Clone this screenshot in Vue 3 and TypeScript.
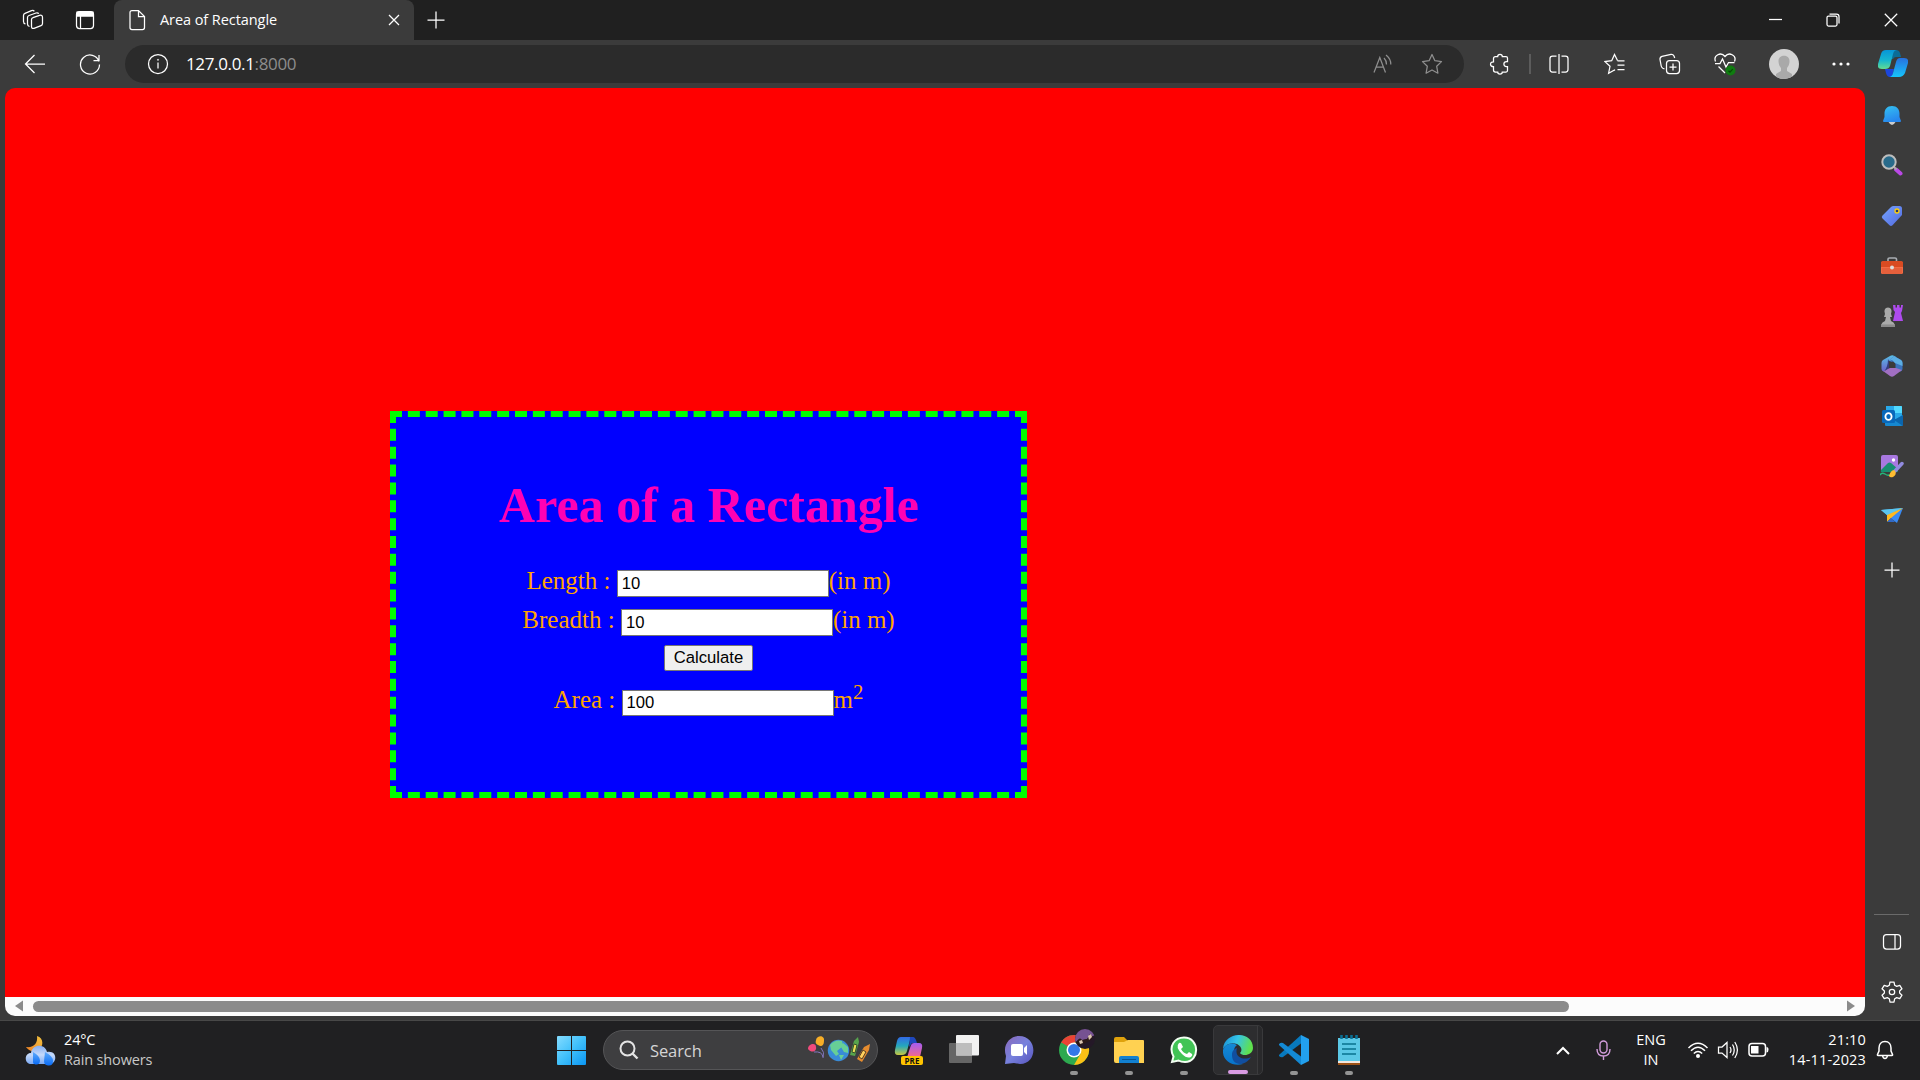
<script setup lang="ts">
import { ref } from 'vue'

const length = ref('10')
const breadth = ref('10')
const area = ref('100')

function calculate(): void {
  area.value = String(Number(length.value) * Number(breadth.value))
}
</script>

<template>
  <div class="screen">
    <header class="tabs">
      <span class="cell workspaces">
        <svg width="22" height="22" viewBox="0 0 22 22" class="line">
          <path d="M11 8.600 17.500 6.300 Q20.500 5.500 20.500 8.500 V14.500 Q20.500 16 19 16.600 L12 19.300 Q9.500 20 9.500 17.500 V10.500 Q9.500 9 11 8.600" />
          <path d="M7.500 17.500 Q5.500 17 5.500 15 V8.500 Q5.500 7 7 6.500 L14 4 Q16 3.400 16.700 4.800" />
          <path d="M3.500 15 Q1.500 14.500 1.500 12.500 V6.500 Q1.500 5 3 4.400 L9.500 1.700 Q11.500 1 12.300 2.300" />
        </svg>
      </span>
      <span class="cell tabmenu">
        <svg width="20" height="20" viewBox="0 0 20 20" class="line">
          <rect x="1.500" y="1.500" width="17" height="17" rx="3" />
          <path d="M2 2H18V6H2Z" fill="#fff" /><path d="M5.500 6V18" />
        </svg>
      </span>
      <div class="tab">
        <svg width="17" height="22" viewBox="0 0 17 22" class="line">
          <path d="M3 1.500H9.500L15.500 7.500V18.500Q15.500 20.500 13.500 20.500H3Q1 20.500 1 18.500V3.500Q1 1.500 3 1.500ZM9.500 1.500V7.500H15.500" />
        </svg>
        <span class="title">Area of Rectangle</span>
        <svg width="12" height="12" viewBox="0 0 12 12" class="line"><path d="M1 1 11 11M11 1 1 11" /></svg>
      </div>
      <svg class="line newtab" width="18" height="18" viewBox="0 0 18 18"><path d="M9 .500V17.500M.500 9H17.500" /></svg>
      <div class="controls">
        <svg width="13" height="13" viewBox="0 0 13 13" class="line"><path d="M0 6.500H13" /></svg>
        <svg width="14" height="14" viewBox="0 0 14 14" class="line"><rect x="1" y="3" width="10" height="10" rx="1.500" /><path d="M3.500 1H10.500Q13 1 13 3.500V10.500" /></svg>
        <svg width="14" height="14" viewBox="0 0 14 14" class="line"><path d="M.800 .800 13.200 13.200M13.200 .800 .800 13.200" /></svg>
      </div>
    </header>

    <nav class="toolbar">
      <span class="cell back"><svg width="22" height="20" viewBox="0 0 22 20" class="line"><path d="M10.500 1 1.500 10 10.500 19M1.500 10H21" /></svg></span>
      <span class="cell refresh"><svg width="22" height="22" viewBox="0 0 22 22" class="line"><path d="M20 8.500A9.500 9.500 0 1 0 20.500 11.500M20 2V7.500H14.500" /></svg></span>
      <div class="address">
        <svg width="22" height="22" viewBox="0 0 22 22" class="line"><circle cx="11" cy="11" r="9.500" /><path d="M11 9.500V15.500" /><circle cx="11" cy="6.800" r=".6" fill="#fff" stroke-width=".6" /></svg>
        <span class="url">127.0.0.1<span class="port">:8000</span></span>
        <svg width="20" height="20" viewBox="0 0 20 20" class="line dim read"><path d="M1 18.500 6.800 3.500 12.500 18.500M3.300 13H10.500M11 4Q13.500 6.500 13.500 10.500M13 1Q18 5 17.800 10.500" /></svg>
        <svg width="22" height="22" viewBox="0 0 22 22" class="line dim"><path d="M11 1.500 13.900 7.700 20.500 8.600 15.700 13.300 16.900 20.200 11 17 5.100 20.200 6.300 13.300 1.500 8.600 8.100 7.700Z" stroke-linejoin="round" /></svg>
      </div>
      <span class="cell puzzle"><svg width="22" height="22" viewBox="0 0 22 22" class="line"><path d="M6.500 3.500H8.700C8.700 .500 13.300 .500 13.300 3.500H17Q18.500 3.500 18.500 5V8.500H17.500C14 8.500 14 13.500 17.500 13.500H18.500V17.500Q18.500 19 17 19H13.300C13.300 21.800 8.700 21.800 8.700 19H6.500Q4.500 19 4.500 17V13.700C.500 13.700 .500 8.800 4.500 8.800V5.500Q4.500 3.500 6.500 3.500Z" /></svg></span>
      <span class="divider"></span>
      <span class="cell split"><svg width="22" height="22" viewBox="0 0 22 22" class="line"><path d="M8.500 3H4.500Q2 3 2 5.500V16.500Q2 19 4.500 19H8.500M13.500 3H17.500Q20 3 20 5.500V16.500Q20 19 17.500 19H13.500" /><path d="M11 1V21" /></svg></span>
      <span class="cell"><svg width="22" height="22" viewBox="0 0 22 22" class="line"><path d="M13.500 7.500 10.500 1.500 7.700 7.700 1 8.600 6 13.300 4.600 20.200 10.500 17 11 17.400M13.500 7.800H20.500M13.500 12H20.500M13.500 16.500H20.500" /></svg></span>
      <span class="cell"><svg width="22" height="22" viewBox="0 0 22 22" class="line"><rect x="7.500" y="7.500" width="13" height="13" rx="3" /><path d="M14 10.500V17.500M10.500 14H17.500M5.500 16 3.800 15.200Q2.500 14.500 2.200 13L1 6.500Q.700 4 3 3.300L12 1.300Q14 1 15 3L15.700 5" /></svg></span>
      <span class="cell"><svg width="24" height="24" viewBox="0 0 24 24" class="line"><path d="M2.500 9.500C0 3 8-.500 12 4.500C16-.500 24 3 21.500 9.500M2 11.500H7L9.500 7 13 15 15.500 10.500H21.500M5.500 14.500 12 21" /><circle cx="17.500" cy="18.500" r="5" fill="#107c10" stroke="none" /><path d="m15.500 18.700 1.500 1.500 2.700-3" stroke="#054b05" /></svg></span>
      <span class="cell avatar"><svg width="30" height="30" viewBox="0 0 30 30"><defs><clipPath id="face"><circle cx="15" cy="15" r="15" /></clipPath></defs><g clip-path="url(#face)"><path d="M0 0H30V30H0Z" fill="#d3d3d3" /><path d="M9.500 12C9.500 5 20.500 5 20.500 12 20.500 16 19 17.500 18 19V22L23 25V30H7V25L12 22V19C11 17.500 9.500 16 9.500 12Z" fill="#a9a9a9" /></g></svg></span>
      <span class="cell dots"><svg width="18" height="4" viewBox="0 0 18 4"><g fill="#fff"><circle cx="2" cy="2" r="1.600" /><circle cx="9" cy="2" r="1.600" /><circle cx="16" cy="2" r="1.600" /></g></svg></span>
      <span class="cell copilot">
        <svg width="30" height="30" viewBox="0 0 30 30">
          <defs>
            <linearGradient id="cpa" x1="0" y1="0" x2="0" y2="1"><stop stop-color="#0795d8" /><stop offset=".55" stop-color="#16b6cf" /><stop offset="1" stop-color="#62db91" /></linearGradient>
            <linearGradient id="cpb" x1="0" y1="0" x2="0" y2="1"><stop stop-color="#2870de" /><stop offset="1" stop-color="#16c5fb" /></linearGradient>
          </defs>
          <path d="M14 1H18Q21 1 22 4L23 8H18Q16 8 15 10H13Z" fill="#0b6c97" />
          <path d="M7 20H16L14 28H12Q9 28 8 24Z" fill="#1c46dc" />
          <path d="M8 1H19Q16 1 15 5L12 17Q11 20 7 20H4Q-1 20 0 15L3 5Q4 1 8 1Z" fill="url(#cpa)" />
          <path d="M22 9H26Q31 9 30 14L27 24Q25 28 21 28H11Q14 28 15 24L18 13Q19 9 22 9Z" fill="url(#cpb)" />
        </svg>
      </span>
    </nav>

    <div class="middle">
      <main class="page">
        <div class="canvas">
          <form class="card" @submit.prevent="calculate">
            <h1>Area of a Rectangle</h1>
            <div class="row"><label>Length :</label><input v-model="length" type="text" /><span>(in m)</span></div>
            <div class="row"><label>Breadth :</label><input v-model="breadth" type="text" /><span>(in m)</span></div>
            <div class="action"><button type="submit">Calculate</button></div>
            <div class="row result"><label>Area :</label><input v-model="area" type="text" /><span>m<sup>2</sup></span></div>
          </form>
        </div>
        <div class="scrollbar">
          <svg width="8" height="12" viewBox="0 0 8 12"><path d="M8 .500V11.500L0 6Z" fill="#8b8b8b" /></svg>
          <div class="thumb"></div>
          <svg width="8" height="12" viewBox="0 0 8 12"><path d="M0 .500V11.500L8 6Z" fill="#8b8b8b" /></svg>
        </div>
      </main>

      <aside class="sidebar">
        <svg width="22" height="22" viewBox="0 0 22 22"><defs><linearGradient id="bell" x1="0" y1="0" x2=".4" y2="1"><stop stop-color="#35c3f1" /><stop offset="1" stop-color="#2787ee" /></linearGradient></defs><path d="M7.500 17H14.500Q11 23 7.500 17Z" fill="#ccc" /><path d="M11 1C6 1 3.500 4.500 3.500 8.500V12L2 16Q2 17 3 17H19Q20 17 20 16L18.500 12V8.500C18.500 4.500 16 1 11 1Z" fill="url(#bell)" /></svg>
        <svg class="lens" width="22" height="22" viewBox="0 0 22 22"><path d="m15 15.500 4.500 4" stroke="#ba48e6" stroke-width="4" stroke-linecap="round" /><path d="m12.500 12.500 3 3" stroke="#aaa" stroke-width="2" /><circle cx="8" cy="8" r="6.700" fill="#296b8b" stroke="#bdbdbd" stroke-width="2" /></svg>
        <svg width="22" height="22" viewBox="0 0 22 22"><defs><linearGradient id="tag" x1="0" y1="0" x2="1" y2="1"><stop stop-color="#76a5ff" /><stop offset="1" stop-color="#5269df" /></linearGradient></defs><path d="M12.500 1H18.500Q21 1 21 3.500V10L11.500 20.300Q10 21.800 8.500 20.300L1.500 13.500Q0 12 1.500 10.500L10 2Q11 1 12.500 1Z" fill="url(#tag)" /><circle cx="16" cy="6" r="2" fill="#263b70" stroke="#ffcf0b" stroke-width="1.300" /></svg>
        <svg width="22" height="22" viewBox="0 0 22 22"><path d="M7 7V4Q7 3 8.500 3H14Q15.500 3 15.500 4V7" fill="none" stroke="#a9adb2" stroke-width="1.600" /><rect y="6.500" width="22" height="12.500" rx="1.500" fill="#f26b43" /><path d="M1 13H21V17.500Q21 19 19.500 19H2.500Q1 19 1 17.500Z" fill="#e5603c" /><path d="M0 8Q0 6 2 6H20Q22 6 22 8V12H0Z" fill="#d94b22" /><circle cx="11" cy="12.500" r="2" fill="#ddd" /></svg>
        <svg width="24" height="24" viewBox="0 0 24 24"><path d="M13 1H15.500V3.500H17V1H19.500V3.500H21V1H23L22 7 21 9 23 17H13L15 8 13.500 6Z" fill="#ae4bed" /><path d="M1 21Q2 18 5 17L6 13H4L5 10Q3 4 8 3.500 13 4 11 10L12 13H10L11 17Q14 18 15 21V23H1Z" fill="#aaa" /><path d="M1 20.500H15V23H1Z" fill="#8b8b8b" /></svg>
        <svg width="22" height="22" viewBox="0 0 22 22"><defs><linearGradient id="ma" x1="0" y1="0" x2="0" y2="1"><stop stop-color="#58bee6" /><stop offset="1" stop-color="#6b61cb" /></linearGradient></defs><path d="M9 1 2 5Q.500 6 .500 8V14Q.500 16 3 16.500L8 13V6L15 2 13 .700Q11-.200 9 1Z" fill="url(#ma)" /><path d="m8 6 5-5 7 4Q21.500 6 21.500 8V14Q21.500 16 19 16.800L14 13V8Z" fill="#3b73be" /><path d="m8 6 5-5 7 4Q21.500 6 21.500 8V11L14 8 11 5Z" fill="#5baee4" /><path d="M2 16 9 13H15L21 15 13 21Q11 22.500 9 21Z" fill="#a16fc2" /><path d="M8 6V13L3 16.500Q7 12 7 4Z" fill="#343d7e" /><path d="M8.500 8 12 6.500 14.500 9V13H9Z" fill="#3b3b3b" /></svg>
        <svg width="22" height="22" viewBox="0 0 22 22"><path d="M5 1H20Q21 1 21 2V14H5Z" fill="#28a8e9" /><path d="M13 1H20Q21 1 21 2V8H13Z" fill="#51d9ff" /><path d="M4 12 12 16 22 10V20Q22 21 20 21H5Q4 21 4 20Z" fill="#1688d0" /><path d="m13 15 9 6V10Z" fill="#0b65ad" /><rect x="1" y="5" width="13" height="13" rx="1.500" fill="#0868bb" /><ellipse cx="7.500" cy="11.500" rx="3.100" ry="3.400" fill="none" stroke="#fff" stroke-width="1.800" /></svg>
        <svg width="24" height="24" viewBox="0 0 24 24"><rect x="1" y="1" width="17" height="17" rx="2" fill="#a878e0" /><path d="m1 16 7-7Q9.500 8 11 9L18 15V18H1Z" fill="#178e70" /><circle cx="13.500" cy="6" r="1.700" fill="#fff" /><path d="M0 21Q2 18 5 20T9 21L12 22" fill="none" stroke="#24b57a" stroke-width="1.500" /><path d="m15 17 7-7.500" stroke="#928be0" stroke-width="3.500" stroke-linecap="round" /><path d="M9 22Q11 15 15 16.500 17 21 13 23 10 24 9 22Z" fill="#ffbd32" /></svg>
        <svg width="24" height="24" viewBox="0 0 24 24"><path d="M1 6 23 4 8 12Z" fill="#44b7f7" /><path d="M23 4 17 19 9 13Z" fill="#388af4" /><path d="M1 6 23 4 7 11Z" fill="#5bc5ee" /><path d="M23 4 7 11 7 18 11 14Z" fill="#ffb91e" /><path d="m7 18 4-4 4 4Z" fill="#3269c5" /></svg>
        <svg class="line" width="16" height="16" viewBox="0 0 16 16"><path d="M8 .500V15.500M.500 8H15.500" /></svg>
        <div class="sidefoot">
          <svg width="20" height="18" viewBox="0 0 20 18" class="line"><rect x="1.500" y="1.500" width="17" height="14.500" rx="3" /><path d="M13 1.500V16" /></svg>
          <svg width="22" height="22" viewBox="0 0 22 22" class="line"><path d="M9 1H13L13.700 4.300 15.700 5.400 18.800 4.300 21 7.800 18.600 10V12L21 14.200 18.800 17.700 15.700 16.600 13.700 17.700 13 21H9L8.300 17.700 6.300 16.600 3.200 17.700 1 14.200 3.400 12V10L1 7.800 3.200 4.300 6.300 5.400 8.300 4.300Z" stroke-linejoin="round" /><circle cx="11" cy="11" r="2.700" /></svg>
        </div>
      </aside>
    </div>

    <footer class="taskbar">
      <div class="weather">
        <svg width="31" height="31" viewBox="0 0 31 31">
          <defs><linearGradient id="cloud" x1="0" y1="0" x2="0" y2="1"><stop stop-color="#86aef0" /><stop offset=".5" stop-color="#c5d9fa" /><stop offset="1" stop-color="#7baaf4" /></linearGradient><linearGradient id="moon" x1="0" y1="1" x2="1" y2="0"><stop stop-color="#f08125" /><stop offset="1" stop-color="#f2c43f" /></linearGradient><linearGradient id="drop" x1="0" y1="0" x2="0" y2="1"><stop stop-color="#5faafb" /><stop offset="1" stop-color="#0a6cf5" /></linearGradient></defs>
          <path d="M12 1C19 3 19 12 13 15 8 18 3 15 1 12 9 13 13 8 12 1Z" fill="url(#moon)" />
          <path d="M6 29C-1 29-1 18 6 18 7 9 20 8 22 17 33 15 32 29 25 29Z" fill="url(#cloud)" />
          <path d="M8 17Q15 21 15 25.500T10.500 29.500Q7.500 29 8 26Z" fill="url(#drop)" /><path d="M20 17Q28 21 28 26T23 30.500Q19 30 19 26Z" fill="url(#drop)" />
        </svg>
        <div class="lines"><span>24°C</span><span class="soft">Rain showers</span></div>
      </div>

      <svg width="29" height="29" viewBox="0 0 29 29"><defs><linearGradient id="win" gradientUnits="userSpaceOnUse" x1="0" y1="0" x2="29" y2="29"><stop stop-color="#85dcff" /><stop offset=".5" stop-color="#40c0fb" /><stop offset="1" stop-color="#0a95f3" /></linearGradient></defs><path d="M1 0H14V14H0V1Q0 0 1 0ZM15 0H28Q29 0 29 1V14H15ZM0 15H14V29H1Q0 29 0 28ZM15 15H29V28Q29 29 28 29H15Z" fill="url(#win)" /></svg>

      <div class="search">
        <svg width="20" height="20" viewBox="0 0 20 20" fill="none" stroke="#e4e4e4" stroke-width="2"><circle cx="8.500" cy="8.500" r="7" /><path d="m13.500 13.500 5 5" stroke-width="2.400" /></svg>
        <span>Search</span>
        <svg class="art" width="64" height="30" viewBox="0 0 64 30">
          <path d="M6 17Q14 16 15 22M13 13Q17 17 15 23" stroke="#8377bf" fill="none" />
          <path d="M0 14C0 9 8 7 8 12 9 16 4 19 0 14Z" fill="#f14b7c" /><path d="M8 5C9 0 17 0 16 6 16 11 13 12 10 10 8 9 7 8 8 5Z" fill="#f7ae27" />
          <circle cx="30.500" cy="15.500" r="10.700" fill="#398bd7" /><path d="M22 10Q27 4 34 6L35 11 29 16 31 19 28 21 23 15ZM35 8 40 12 40 18 36 17 33 12ZM31 20 36 20 33 25Z" fill="#67cf96" />
          <path d="m42 20 4-14 4-4 1 5-4 14Z" fill="#57a54d" /><path d="m44 17 2-8 3 1-2 8Z" fill="#e8df55" stroke="#354d2a" /><path d="m49 24 7-12 6-3-1 6-7 12Z" fill="#e68c2f" /><path d="m51 22 4-7 3 2-4 7Z" fill="#ffd15e" stroke="#584023" />
        </svg>
      </div>

      <div class="apps">
        <span class="app">
          <svg width="30" height="30" viewBox="0 0 30 30"><defs><linearGradient id="pa" x1="0" y1="0" x2="0" y2="1"><stop stop-color="#3269e7" /><stop offset=".5" stop-color="#24a8bc" /><stop offset="1" stop-color="#c7c840" /></linearGradient><linearGradient id="pb" x1="0" y1="0" x2="0" y2="1"><stop stop-color="#a45cf2" /><stop offset="1" stop-color="#f46a8b" /></linearGradient></defs><path d="M7 2H20L16 5 13 16Q12 20 8 20H4Q0 20 1 15L3 6Q4 2 7 2Z" fill="url(#pa)" /><path d="M16 2H19Q21 2 22 5L23 8H18L15 12Z" fill="#1f47bd" /><path d="M20 8H25Q29 8 28 13L26 22H13Q14 20 15 16L17 10Q18 8 20 8Z" fill="url(#pb)" /></svg>
          <b class="pre">PRE</b>
        </span>
        <span class="app"><svg width="30" height="30" viewBox="0 0 30 30"><rect x="0" y="8" width="23" height="20" rx="1" fill="#666" /><rect x="7" y="0" width="23" height="20.500" rx="1" fill="#f1f1f1" /><path d="M7 8H23V20.500H7Z" fill="#bdbdbd" /></svg></span>
        <span class="app"><svg width="30" height="30" viewBox="0 0 30 30"><defs><linearGradient id="chat" x1="0" y1="0" x2="1" y2="1"><stop stop-color="#8b69ba" /><stop offset=".5" stop-color="#7781dd" /><stop offset="1" stop-color="#5753bd" /></linearGradient></defs><path d="M15 1C34 1 34 29 16 29L10 28 1 29 2 21C-2 10 6 1 15 1Z" fill="url(#chat)" /><rect x="7" y="9" width="12" height="12" rx="2" fill="#fff" /><path d="m20 13 3-3V20L20 17Z" fill="#fff" /></svg></span>
        <span class="app run"><svg width="37" height="37" viewBox="0 0 37 37" class="chrome"><circle cx="15" cy="22" r="15" fill="#2da94f" /><path d="M15 22 2 14.500A15 15 0 0 1 28 14.500H15Z" fill="#ea4335" /><path d="M15 14.500H28A15 15 0 0 1 15 37L21.500 25.700Z" fill="#fbc116" /><path d="M2 14.500 8.500 25.700 15 22Z" fill="#2da94f" /><circle cx="15" cy="22" r="7.500" fill="#fff" /><circle cx="15" cy="22" r="6" fill="#3377e8" /><defs><clipPath id="user"><circle cx="26" cy="11" r="10" /></clipPath></defs><g clip-path="url(#user)"><path d="M16 1H36V21H16Z" fill="#241827" /><path d="M16 1H36V7L28 11 16 14Z" fill="#765292" /><path d="M17 14Q21 8 23 12L28 11 31 6 34 9 31 13 26 15 21 18Z" fill="#2b191a" /><path d="m20 13 3-1 1 3-3 1ZM29 8 32 6 33 9 30 12Z" fill="#dcc6b2" /></g></svg></span>
        <span class="app run"><svg width="30" height="30" viewBox="0 0 30 30"><path d="M0 4Q0 2 2 2H10L14 6H30V12H0Z" fill="#dfa20c" /><path d="M0 7H10L14 5H29Q30 5 30 6V28H2Q0 28 0 26Z" fill="#ffd151" /><path d="M5 28V23Q5 21 7 21H23Q25 21 25 23V28Z" fill="#1280d0" /><path d="M8 24.500H22" stroke="#095590" /></svg></span>
        <span class="app run"><svg width="30" height="30" viewBox="0 0 30 30"><path d="M3 27 4.500 21.500C-1 11 6 2.500 15 2.500 31 2.500 31 27 16 27Q12 27 9.500 25.500Z" fill="#41c455" stroke="#f3fff3" stroke-width="2" /><path d="M10 8Q12 7 13 10L14 12 12 14Q14 18 18 19L20 17 23 19Q24 20 22 22 18 24 13 19 6 12 10 8Z" fill="#fff" /></svg></span>
        <span class="app run active"><svg width="30" height="30" viewBox="0 0 30 30"><defs><linearGradient id="ea" x1="0" y1="0" x2="1" y2=".25"><stop stop-color="#178bd3" /><stop offset=".5" stop-color="#35c4e7" /><stop offset="1" stop-color="#5fe14e" /></linearGradient><linearGradient id="eb" x1="0" y1="0" x2="0" y2="1"><stop stop-color="#158ad4" /><stop offset="1" stop-color="#0873ca" /></linearGradient></defs><path d="M0 14C1-4 30-5 30 13 30 20 20 22 17 18 20 15 18 11 14 9 8 7 3 9 0 14Z" fill="url(#ea)" /><path d="M0 15C2 8 10 7 14 10 9 13 9 25 20 29 10 32-1 26 0 15Z" fill="url(#eb)" /><path d="M14 13C11 22 21 26 28 22 22 32 9 31 9 20 9 16 11 14 14 13Z" fill="#114e9f" /></svg></span>
        <span class="app run"><svg width="30" height="30" viewBox="0 0 30 30"><path d="M1 19 22 0 24 7 4 22Q2 23 0 21V20Z" fill="#0879bd" /><path d="M1 11 22 30 24 23 4 8Q2 7 0 9V10Z" fill="#1389d4" /><path d="M22 0 30 4V26L22 30Z" fill="#22a0ee" /></svg></span>
        <span class="app run"><svg width="24" height="30" viewBox="0 0 24 30"><path d="M1 27H23V30H1Z" fill="#9c5014" /><path d="M1 24H23V28H1Z" fill="#f2e5dc" /><path d="M1 3H23V26H1Z" fill="#5bc8e6" /><path d="M5 9H19M5 14H19M5 19H19" stroke="#08718f" stroke-width="1.700" /><path d="M4.500 0V4M9.500 0V4M14.500 0V4M19.500 0V4" stroke="#087096" stroke-width="2.500" /></svg></span>
      </div>

      <div class="tray">
        <span class="cell up"><svg width="14" height="9" viewBox="0 0 14 9" class="line"><path d="M1 8 7 2 13 8" stroke-width="2" /></svg></span>
        <span class="cell mic"><svg width="15" height="20" viewBox="0 0 15 20" fill="none" stroke="#d29cdb" stroke-width="1.400"><rect x="4" y="1" width="7" height="12" rx="3.500" /><path d="M1 9Q1 16 7.500 16T14 9M7.500 16V20" /></svg></span>
        <div class="lines lang"><span>ENG</span><span>IN</span></div>
        <span class="cell"><svg width="22" height="18" viewBox="0 0 22 18" class="line"><path d="M1.500 7Q11-2.500 20.500 7M4 9.800Q11 2.500 18 9.800M6.800 12.500Q11 8.500 15.200 12.500" stroke-width="1.500" /><circle cx="11" cy="15" r="2" fill="#fff" stroke="none" /></svg></span>
        <span class="cell"><svg width="22" height="20" viewBox="0 0 22 20" class="line"><path d="M1.500 7H5L10 2.500V17.500L5 13H1.500ZM13 7Q15 10 13 13M15.500 4.500Q19 10 15.500 15.500M17.800 2Q23 10 17.800 18" /></svg></span>
        <span class="cell"><svg width="21" height="16" viewBox="0 0 21 16" class="line"><rect x="1" y="1.500" width="16.500" height="12.500" rx="3" stroke-width="1.500" /><path d="M3 4H10.500V11.500H3Z" fill="#fff" stroke="none" /><path d="M18.500 5Q20.500 5 20.500 7.800T18.500 10.500Z" fill="#fff" stroke="none" /></svg></span>
        <div class="lines clock"><span>21:10</span><span>14-11-2023</span></div>
        <svg class="line bell" width="18" height="20" viewBox="0 0 18 20"><path d="M9 1.500C5 1.500 3 4.500 3 8V11L1.500 14.500Q1.200 15.500 2 15.500H16Q16.800 15.500 16.500 14.500L15 11V8C15 4.500 13 1.500 9 1.500ZM6.500 15.500Q7 18.500 9 18.500T11.500 15.500" stroke-width="1.500" /></svg>
      </div>
    </footer>
  </div>
</template>

<style>
body {
  margin: 0;
  overflow: hidden;
}
</style>

<style scoped>
* {
  box-sizing: border-box;
}
svg {
  display: block;
  flex: none;
}
.screen {
  width: 1920px;
  height: 1080px;
  display: flex;
  flex-direction: column;
  overflow: hidden;
  background: #3b3b3b;
  color: #fff;
  font-family: "Open Sans", "Noto Sans", sans-serif;
}
.line {
  fill: none;
  stroke: #fff;
  stroke-width: 1.25;
}
.dim {
  stroke: #8f8f8f;
}
.cell {
  display: flex;
  align-items: center;
  justify-content: center;
  flex: none;
  width: 55px;
}

/* Tab strip */
.tabs {
  height: 40px;
  flex: none;
  display: flex;
  align-items: center;
  background: #202020;
}
.workspaces {
  width: 65px;
}
.tabmenu {
  width: 40px;
}
.tab {
  width: 300px;
  height: 40px;
  margin-left: 9px;
  padding: 0 14px 0 15px;
  display: flex;
  align-items: center;
  background: #3b3b3b;
  border-radius: 8px 8px 0 0;
}
.title {
  flex: 1;
  margin-left: 14px;
  font-size: 14.5px;
  line-height: 20px;
  letter-spacing: -0.07px;
  white-space: nowrap;
}
.newtab {
  margin-left: 13px;
}
.controls {
  margin-left: auto;
  margin-right: 22px;
  display: flex;
  gap: 44px;
}

/* Toolbar */
.toolbar {
  height: 48px;
  flex: none;
  display: flex;
  align-items: center;
}
.back {
  width: 70px;
}
.refresh {
  width: 40px;
}
.address {
  width: 1339px;
  height: 38px;
  margin-left: 15px;
  padding: 0 21px 0 22px;
  display: flex;
  align-items: center;
  background: #2b2b2b;
  border-radius: 19px;
}
.url {
  margin-left: 17px;
  padding-bottom: 2px;
  font-size: 17px;
  letter-spacing: -0.35px;
}
.port {
  color: #8d8d8d;
}
.read {
  margin-left: auto;
  margin-right: 28px;
}
.puzzle {
  width: 65px;
  padding-left: 6px;
}
.divider {
  width: 1.5px;
  height: 20px;
  background: #5c5c5c;
}
.split {
  width: 57px;
}
.avatar {
  width: 62px;
}
.dots {
  width: 53px;
}
.copilot {
  width: 51px;
}

/* Web page */
.middle {
  height: 932px;
  flex: none;
  display: flex;
}
.page {
  width: 1860px;
  height: 927.5px;
  margin-left: 5px;
  flex: none;
  display: flex;
  flex-direction: column;
  border-radius: 10px;
  overflow: hidden;
}
.canvas {
  height: 909px;
  flex: none;
  padding: 323px 0 0 385px;
  background: red;
}
.card {
  width: 637px;
  height: 387px;
  display: flex;
  flex-direction: column;
  border: 6px dashed lime;
  background: blue;
  color: orange;
  font-family: "Liberation Serif", serif;
  font-size: 25px;
}
h1 {
  margin: 60px 0 32px;
  padding-left: 1px;
  font-size: 50px;
  line-height: 57px;
  text-align: center;
  color: #ff00b4;
}
.row {
  height: 39px;
  display: flex;
  justify-content: center;
  align-items: baseline;
  line-height: 29px;
}
label {
  margin-right: 6.25px;
}
input {
  width: 212px;
  height: 27px;
  padding: 2px 4px 1px;
  border: 1.5px solid #767676;
  border-radius: 0;
  background: #fff;
  color: #000;
  font-family: "Liberation Sans", sans-serif;
  font-size: 16.67px;
  outline: none;
}
.action {
  height: 41px;
  padding-top: 1px;
  display: flex;
  justify-content: center;
}
button {
  width: 89px;
  height: 26px;
  padding: 0;
  border: 1.5px solid #767676;
  border-radius: 2px;
  background: #efefef;
  color: #000;
  font-family: "Liberation Sans", sans-serif;
  font-size: 16.67px;
  line-height: 22px;
}
.result input {
  height: 26px;
  padding: 1px 4px;
}
sup {
  font-size: 20.8px;
  line-height: 0;
}
.scrollbar {
  height: 18.5px;
  padding: 0 10px;
  display: flex;
  align-items: center;
  background: #fcfcfc;
}
.thumb {
  width: 1536px;
  height: 11px;
  margin: 0 278px 0 10px;
  flex: none;
  border-radius: 6px;
  background: #8b8b8b;
}

/* Sidebar */
.sidebar {
  width: 55px;
  height: 932px;
  padding: 3px 2px 0 0;
  display: grid;
  grid-template-rows: repeat(9, 50px) 57px 1fr;
  justify-items: center;
  align-items: center;
}
.lens {
  margin-bottom: 3px;
}
.sidefoot {
  align-self: end;
  width: 35px;
  height: 106px;
  padding-top: 18px;
  display: flex;
  flex-direction: column;
  align-items: center;
  gap: 30px;
  border-top: 1.5px solid #6a6a6a;
}

/* Taskbar */
.taskbar {
  height: 60px;
  flex: none;
  padding-bottom: 1px;
  display: flex;
  align-items: center;
  border-top: 1px solid #484848;
  background: #202022;
}
.weather {
  width: 557px;
  flex: none;
  padding-left: 25px;
  display: flex;
  align-items: center;
  gap: 8px;
}
.lines {
  display: flex;
  flex-direction: column;
  padding-bottom: 1px;
  font-size: 14.5px;
  line-height: 20px;
  letter-spacing: -0.15px;
  white-space: nowrap;
}
.soft {
  color: #c8c8c8;
}
.search {
  width: 275px;
  height: 40px;
  flex: none;
  margin-left: 17px;
  padding: 0 5px 0 15px;
  display: flex;
  align-items: center;
  border: 1px solid #555557;
  border-radius: 20px;
  background: #3e3e40;
  color: #d5d5d5;
  font-size: 16.5px;
}
.search > span {
  margin-left: 11px;
  letter-spacing: -0.1px;
}
.art {
  margin-left: auto;
}
.apps {
  margin-left: 3px;
  display: flex;
}
.app {
  position: relative;
  width: 55px;
  height: 50px;
  display: flex;
  align-items: center;
  justify-content: center;
}
.pre {
  position: absolute;
  left: 20px;
  bottom: 10px;
  width: 22px;
  height: 9px;
  border-radius: 2px;
  background: #ffc400;
  color: #111;
  font-size: 8px;
  line-height: 9px;
  text-align: center;
}
.chrome {
  margin: -7px 0 0 7px;
}
.run::after {
  content: "";
  position: absolute;
  left: 23.5px;
  bottom: 0;
  width: 8px;
  height: 4px;
  border-radius: 2px;
  background: #949494;
}
.active {
  width: 50px;
  margin: 0 3px 0 2px;
  border: 1px solid #39393b;
  border-radius: 5px;
  background: linear-gradient(90deg, #2d2d2f 43px, #3b3b3d 43px 44px, #29292b 44px);
}
.active::after {
  left: 14px;
  width: 20px;
  background: #d99be3;
}
.tray {
  margin-left: auto;
  margin-right: 26px;
  display: flex;
  align-items: center;
}
.tray .cell {
  width: 30px;
}
.tray .up {
  width: 40px;
}
.tray .mic {
  width: 40px;
}
.lang {
  width: 60px;
  padding-right: 4px;
  align-items: center;
  letter-spacing: 0;
}
.clock {
  width: 93px;
  align-items: flex-end;
  letter-spacing: 0.15px;
}
.bell {
  margin-left: 10px;
}
</style>
